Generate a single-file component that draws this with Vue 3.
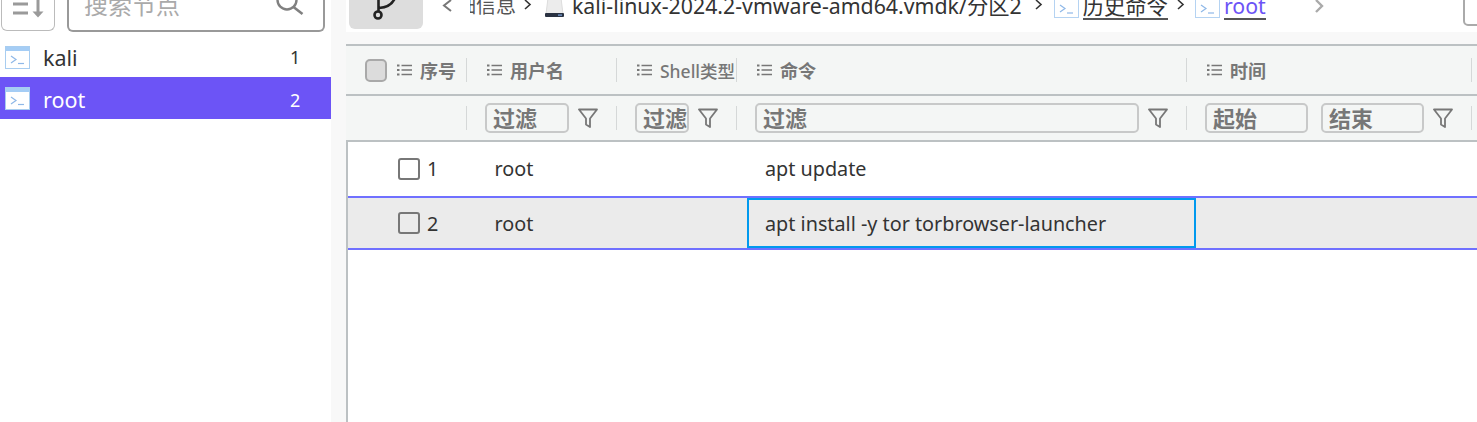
<template>
  <div class="page">
    <aside class="sidebar">
      <div class="tools">
        <button class="sort-btn">
          <svg width="40" height="20" viewBox="0 0 40 20">
            <path d="M7 4h15M7 13h15" stroke="#9a9a9a" stroke-width="3" fill="none" />
            <path d="M32 0v13" stroke="#9a9a9a" stroke-width="3" fill="none" />
            <path d="M26.500 11.500h11L32 17.500z" fill="#9a9a9a" />
          </svg>
        </button>
        <div class="search">
          <span class="search-text">搜索节点</span>
          <svg class="search-icon" width="30" height="18" viewBox="0 0 30 18">
            <circle cx="11" cy="0" r="9.500" stroke="#808080" stroke-width="2.400" fill="none" />
            <path d="M17.500 7l9 7" stroke="#808080" stroke-width="2.600" fill="none" />
          </svg>
        </div>
      </div>
      <ul class="node-list">
        <li v-for="n in nodes" :key="n.name" class="node" :class="{ active: n.active }">
          <svg class="term" width="25" height="23" viewBox="0 0 25 23">
            <rect x="0.500" y="0.500" width="24" height="22" fill="#fff" stroke="#a8cdf0" />
            <rect x="1" y="1" width="23" height="4" fill="#a5cdf5" />
            <path d="M6 10l5 3.500-5 3.500" stroke="#8fb8e8" stroke-width="1.200" fill="none" />
            <path d="M13 17.500h6" stroke="#8fb8e8" stroke-width="1.200" />
          </svg>
          <span class="node-name">{{ n.name }}</span>
          <span class="node-count">{{ n.count }}</span>
        </li>
      </ul>
    </aside>

    <main class="main">
      <div class="topbar">
        <button class="branch-btn">
          <svg width="28" height="21" viewBox="0 0 28 21">
            <circle cx="7" cy="15" r="3.500" stroke="#222" stroke-width="2.600" fill="none" />
            <path d="M7.500 11V0M8 8C16 7.500 21 5 24 -2" stroke="#222" stroke-width="2.600" fill="none" />
          </svg>
        </button>
        <nav class="crumbs">
          <svg class="back" width="12" height="14" viewBox="0 0 12 14">
            <path d="M10 0L3 5.500l7 5.500" stroke="#777" stroke-width="2" fill="none" />
          </svg>
          <div class="clip"><span>详细信息</span></div>
          <svg class="sep first" width="10" height="12" viewBox="0 0 10 12"><path d="M2 0l5 4.500-5 4.500" stroke="#333" stroke-width="1.600" fill="none" /></svg>
          <svg class="disk" width="21" height="18" viewBox="0 0 21 18">
            <path d="M4 -2h13l2 16H2z" fill="#ececec" stroke="#dcdcdc" />
            <rect x="1" y="13" width="19" height="4" rx="1" fill="#2a3242" />
            <rect x="14" y="14.500" width="4" height="1.200" fill="#7fa6e0" />
          </svg>
          <span class="crumb-text">kali-linux-2024.2-vmware-amd64.vmdk/分区2</span>
          <svg class="sep after-disk" width="10" height="12" viewBox="0 0 10 12"><path d="M2 0l5 4.500-5 4.500" stroke="#333" stroke-width="1.600" fill="none" /></svg>
          <svg class="term small" width="25" height="18" viewBox="0 0 25 18">
            <rect x="0.500" y="-6" width="24" height="23.500" fill="#fff" stroke="#b5d3f2" />
            <path d="M6 5l5 3.500L6 12" stroke="#8fb8e8" stroke-width="1.200" fill="none" />
            <path d="M13 13h6" stroke="#8fb8e8" stroke-width="1.200" />
          </svg>
          <span class="crumb-text link">历史命令</span>
          <svg class="sep" width="10" height="12" viewBox="0 0 10 12"><path d="M2 0l5 4.500-5 4.500" stroke="#333" stroke-width="1.600" fill="none" /></svg>
          <svg class="term small last" width="25" height="18" viewBox="0 0 25 18">
            <rect x="0.500" y="-6" width="24" height="23.500" fill="#fff" stroke="#b5d3f2" />
            <path d="M6 5l5 3.500L6 12" stroke="#8fb8e8" stroke-width="1.200" fill="none" />
            <path d="M13 13h6" stroke="#8fb8e8" stroke-width="1.200" />
          </svg>
          <span class="crumb-text link current">root</span>
          <svg class="forward" width="14" height="18" viewBox="0 0 14 18">
            <path d="M3 0l6 6-6 6" stroke="#aaa" stroke-width="2.400" fill="none" />
          </svg>
        </nav>
        <div class="corner-box"></div>
      </div>

      <section class="table">
        <div class="head-row">
          <div v-for="(c, i) in columns" :key="c.label" class="cell head-cell" :class="c.cls">
            <span v-if="i === 0" class="all-check"></span>
            <svg class="list-ico" width="15" height="12" viewBox="0 0 15 12">
              <path d="M0 1.500h2.500M0 6h2.500M0 10.500h2.500" stroke="#777" stroke-width="2" />
              <path d="M4.500 1.500H15M4.500 6H15M4.500 10.500H15" stroke="#777" stroke-width="1.500" />
            </svg>
            <span class="head-label" :class="{ thin: c.label.startsWith('Shell') }">{{ c.label }}</span>
          </div>
          <div class="cell rest"></div>
        </div>

        <div class="filter-row">
          <div class="cell filter-cell col-no"></div>
          <div class="cell filter-cell col-user">
            <input class="f-input w84" placeholder="过滤" />
            <svg class="funnel" width="20" height="21" viewBox="0 0 20 21"><path d="M1 1.500h18l-7 9v8.500l-4-2.500v-6z" stroke="#777" stroke-width="1.800" stroke-linejoin="round" fill="none" /></svg>
          </div>
          <div class="cell filter-cell col-shell">
            <input class="f-input w54" placeholder="过滤" />
            <svg class="funnel" width="20" height="21" viewBox="0 0 20 21"><path d="M1 1.500h18l-7 9v8.500l-4-2.500v-6z" stroke="#777" stroke-width="1.800" stroke-linejoin="round" fill="none" /></svg>
          </div>
          <div class="cell filter-cell col-cmd">
            <input class="f-input w384" placeholder="过滤" />
            <svg class="funnel" width="20" height="21" viewBox="0 0 20 21"><path d="M1 1.500h18l-7 9v8.500l-4-2.500v-6z" stroke="#777" stroke-width="1.800" stroke-linejoin="round" fill="none" /></svg>
          </div>
          <div class="cell filter-cell col-time">
            <input class="f-input w103" placeholder="起始" />
            <input class="f-input w103 second" placeholder="结束" />
            <svg class="funnel" width="20" height="21" viewBox="0 0 20 21"><path d="M1 1.500h18l-7 9v8.500l-4-2.500v-6z" stroke="#777" stroke-width="1.800" stroke-linejoin="round" fill="none" /></svg>
          </div>
          <div class="cell rest"></div>
        </div>

        <div v-for="r in rows" :key="r.no" class="row" :class="{ selected: r.selected }">
          <div class="td td-no"><span class="check"></span><span class="num">{{ r.no }}</span></div>
          <div class="td td-user"><span>{{ r.user }}</span></div>
          <div class="td td-shell"></div>
          <div class="td td-cmd" :class="{ focused: r.selected }"><span>{{ r.cmd }}</span></div>
          <div class="td"></div>
        </div>
      </section>
    </main>
  </div>
</template>

<script setup>
const nodes = [
  { name: "kali", count: 1 },
  { name: "root", count: 2, active: true },
];

const columns = [
  { label: "序号", cls: "col-no" },
  { label: "用户名", cls: "col-user" },
  { label: "Shell类型", cls: "col-shell" },
  { label: "命令", cls: "col-cmd" },
  { label: "时间", cls: "col-time" },
];

const rows = [
  { no: 1, user: "root", cmd: "apt update" },
  { no: 2, user: "root", cmd: "apt install -y tor torbrowser-launcher", selected: true },
];
</script>

<style>
html,
body {
  margin: 0;
  height: 100%;
  overflow: hidden;
  background: #fff;
}
</style>

<style scoped>
.page {
  display: flex;
  width: 1477px;
  height: 422px;
  overflow: hidden;
  font-family: "Noto Sans", "Noto Sans CJK SC", sans-serif;
  color: #333;
  background: #fff;
}

.sidebar {
  width: 331px;
  flex: none;
  background: #fff;
}
.tools {
  display: flex;
  height: 37px;
  padding-left: 1px;
  gap: 12px;
  align-items: flex-start;
}
.sort-btn {
  width: 54px;
  height: 31px;
  padding: 0 0 0 4px;
  display: flex;
  align-items: flex-start;
  background: #fff;
  border: 1px solid #bbb;
  border-top: 0;
  border-radius: 0 0 6px 6px;
}
.search {
  width: 258px;
  height: 32px;
  display: flex;
  justify-content: space-between;
  box-sizing: border-box;
  border: 2px solid #999;
  border-top: 0;
  border-radius: 0 0 6px 6px;
  overflow: hidden;
}
.search-text {
  margin: -13px 0 0 15px;
  font-size: 24px;
  line-height: 36px;
  color: #aaa;
}
.search-icon {
  margin-right: 17px;
}

.node-list {
  list-style: none;
  margin: 0;
  padding: 0;
}
.node {
  height: 40px;
  display: flex;
  align-items: center;
  padding-left: 5px;
  font-size: 21.500px;
  color: #333;
}
.node.active {
  height: 42px;
  background: #6c54f6;
  color: #fff;
}
.node.active .node-name,
.node.active .node-count {
  padding-top: 3px;
}
.node-name {
  margin-left: 13px;
  flex: 1;
}
.node-count {
  width: 41px;
  font-size: 18px;
}

.main {
  flex: 1;
  min-width: 0;
  background: #f8f8f8;
  padding-left: 15px;
}
.topbar {
  display: flex;
  height: 32px;
  background: #fff;
  overflow: hidden;
  margin-bottom: 12px;
  position: relative;
}
.branch-btn {
  width: 74px;
  height: 29px;
  margin-left: 3px;
  padding: 0 0 0 22px;
  display: flex;
  flex: none;
  border: 0;
  background: #ddd;
  border-radius: 0 0 6px 6px;
}

.crumbs {
  display: flex;
  align-items: flex-start;
  font-size: 21.300px;
  line-height: 28px;
  color: #333;
  white-space: nowrap;
}
.back {
  margin: 0 0 0 18px;
  flex: none;
}
.clip {
  display: flex;
  justify-content: flex-end;
  width: 46px;
  margin-left: 17px;
  overflow: hidden;
}
.clip span {
  display: block;
  margin-top: -8px;
  font-size: 20px;
  color: #555;
}
.sep {
  flex: none;
  margin: 0 0 0 8px;
}
.sep.first {
  margin-left: 7px;
}
.sep.after-disk {
  margin-left: 12px;
}
.disk {
  flex: none;
  margin: 0 7px 0 11px;
}
.crumb-text {
  margin-top: -8px;
}
.term.small {
  flex: none;
  margin: 0 4px 0 10px;
}
.term.small.last {
  margin: 0 4px 0 9px;
}
.link {
  height: 26px;
  border-bottom: 2px solid #555;
}
.current {
  color: #6c54f6;
}
.forward {
  margin: 0 0 0 47px;
  flex: none;
}
.corner-box {
  position: absolute;
  right: -10px;
  top: -4px;
  width: 20px;
  height: 26px;
  border: 2px solid #aaa;
  border-radius: 5px;
}

.table {
  height: 378px;
  background: #fff;
  border-left: 2px solid #bcc1c3;
}
.head-row,
.filter-row {
  display: flex;
  background: #f4f6f5;
  border-top: 2px solid #bcc1c3;
  box-sizing: border-box;
  margin-left: -2px;
  padding-left: 2px;
}
.head-row {
  height: 50px;
}
.filter-row {
  height: 48px;
  border-bottom: 2px solid #bcc1c3;
}
.cell {
  position: relative;
  display: flex;
  align-items: center;
  flex: none;
  box-sizing: border-box;
  padding-left: 20px;
  height: 100%;
}
.cell::after {
  content: "";
  position: absolute;
  right: 0;
  width: 1px;
  background: #d5d8d8;
}
.head-cell::after {
  top: 12px;
  height: 24px;
}
.filter-cell::after {
  top: 10px;
  height: 24px;
}
.col-no {
  width: 119px;
  padding-left: 17px;
}
.col-user {
  width: 150px;
}
.col-shell {
  width: 120px;
}
.col-cmd {
  width: 450px;
}
.col-time {
  width: 285px;
}
.rest {
  flex: 1;
}
.rest::after {
  display: none;
}
.all-check {
  width: 22px;
  height: 23px;
  box-sizing: border-box;
  background: #dcdcdc;
  border: 2px solid #a9a9a9;
  border-radius: 5px;
  margin-right: 10px;
}
.list-ico {
  flex: none;
}
.head-label {
  margin-left: 8px;
  font-size: 18px;
  font-weight: 700;
  color: #777;
  white-space: nowrap;
}
.head-label.thin {
  font-size: 17.500px;
  font-weight: 500;
}
.f-input {
  box-sizing: border-box;
  height: 30px;
  padding: 0 0 0 6px;
  margin: -1px 0 0 -2px;
  font-family: inherit;
  font-size: 22px;
  font-weight: 700;
  background: transparent;
  border: 2px solid #c8c9c9;
  border-radius: 5px;
  outline: none;
  flex: none;
}
.f-input::placeholder {
  color: #777;
  opacity: 1;
}
.w84 {
  width: 84px;
}
.w54 {
  width: 54px;
}
.w384 {
  width: 384px;
}
.w103 {
  width: 103px;
}
.second {
  margin-left: 13px;
}
.funnel {
  margin-left: 9px;
  flex: none;
}

.row {
  display: grid;
  grid-template-columns: 129px 150px 120px 449px 1fr;
  height: 54px;
  font-size: 19.800px;
  color: #333;
  background: #fff;
}
.row.selected {
  background: #ebebeb;
  border-top: 2px solid #7070ff;
  border-bottom: 2px solid #7070ff;
  box-sizing: border-box;
}
.td {
  display: flex;
  align-items: center;
  padding-left: 17.500px;
  min-width: 0;
}
.td-cmd {
  padding-left: 18px;
}
.td > span:not(.check) {
  padding-bottom: 2px;
}
.row.selected .td > span {
  padding-bottom: 0;
  padding-top: 1px;
}
.td-no {
  padding-left: 50px;
}
.check {
  width: 22px;
  height: 22px;
  box-sizing: border-box;
  border: 2px solid #777;
  border-radius: 3px;
  margin-right: 7px;
  flex: none;
}
.focused {
  box-sizing: border-box;
  padding-left: 16px;
  border: 2px solid #0099ee;
}
</style>
